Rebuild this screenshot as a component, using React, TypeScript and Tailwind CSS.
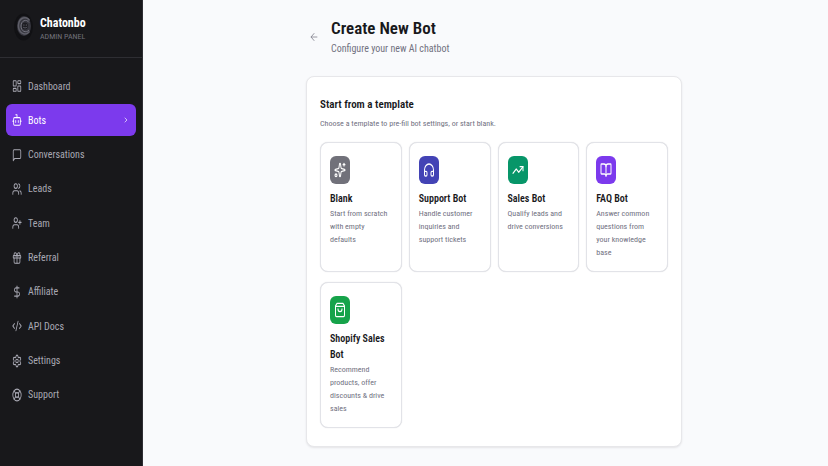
import type { ReactNode } from "react";
import {
  ArrowLeft,
  BookOpen,
  ChevronRight,
  CodeXml,
  DollarSign,
  Gift,
  Headphones,
  LayoutDashboard,
  LifeBuoy,
  Settings,
  Sparkles,
  TrendingUp,
  UserPlus,
  Users,
} from "lucide-react";
import type { LucideIcon, LucideProps } from "lucide-react";

function Glyph({ className, children }: { className?: string; children: ReactNode }) {
  return (
    <svg
      viewBox="0 0 24 24"
      preserveAspectRatio="none"
      fill="none"
      stroke="currentColor"
      strokeWidth="2"
      strokeLinecap="round"
      strokeLinejoin="round"
      className={className}
      aria-hidden="true"
    >
      {children}
    </svg>
  );
}

function BotIcon({ className }: LucideProps) {
  return (
    <Glyph className={className}>
      <path d="M12 8V3H9" />
      <rect x="4" y="8" width="16" height="13" rx="2" />
      <path d="M2 14h2M20 14h2M9 13v3M15 13v3" />
    </Glyph>
  );
}

function MessageIcon({ className }: LucideProps) {
  return (
    <Glyph className={className}>
      <path d="M21 16a2 2 0 0 1-2 2H6.500L3 21.500V5a2 2 0 0 1 2-2h14a2 2 0 0 1 2 2z" />
    </Glyph>
  );
}

function ShopBagIcon({ className }: LucideProps) {
  return (
    <Glyph className={className}>
      <path d="M6 2 3 6v14a2 2 0 0 0 2 2h14a2 2 0 0 0 2-2V6l-3-4z" />
      <path d="M3 6.500h18" />
      <path d="M16 10.500a4 4 0 0 1-8 0" />
    </Glyph>
  );
}

function Logo() {
  return (
    <svg viewBox="0 0 20 28" className="h-7 w-5 shrink-0" fill="none" role="img" aria-label="Chatonbo logo">
      <ellipse cx="9.500" cy="14" rx="9.500" ry="13.500" fill="#111114" />
      <ellipse cx="10" cy="13" rx="7" ry="10" fill="#36363e" />
      <path d="M15.500 7.500C12.500 2.500 5 4.500 4.500 12s6.500 12 11 6.500" stroke="#5f5f69" strokeWidth="1.500" />
      <path d="M15 9.500C12.500 5.500 7 7.500 7 13s5 7.500 8 4" stroke="#74747f" strokeWidth="1" />
      <ellipse cx="11" cy="13" rx="3" ry="3.500" fill="#1c1c21" />
      <path d="M9 14c1.200 1.200 3 1.200 4.200 0" stroke="#666671" strokeWidth="0.800" />
      <circle cx="9.900" cy="12" r="0.600" fill="#777782" />
      <circle cx="12.300" cy="12" r="0.600" fill="#777782" />
    </svg>
  );
}

type NavIcon = LucideIcon | typeof BotIcon;

const nav: { label: string; icon: NavIcon; active?: boolean }[] = [
  { label: "Dashboard", icon: LayoutDashboard },
  { label: "Bots", icon: BotIcon, active: true },
  { label: "Conversations", icon: MessageIcon },
  { label: "Leads", icon: Users },
  { label: "Team", icon: UserPlus },
  { label: "Referral", icon: Gift },
  { label: "Affiliate", icon: DollarSign },
  { label: "API Docs", icon: CodeXml },
  { label: "Settings", icon: Settings },
  { label: "Support", icon: LifeBuoy },
];

const templates: { title: string; text: string; icon: NavIcon; color: string }[] = [
  { title: "Blank", text: "Start from scratch with empty defaults", icon: Sparkles, color: "bg-[#71717a]" },
  { title: "Support Bot", text: "Handle customer inquiries and support tickets", icon: Headphones, color: "bg-[#4343b5]" },
  { title: "Sales Bot", text: "Qualify leads and drive conversions", icon: TrendingUp, color: "bg-[#079669]" },
  { title: "FAQ Bot", text: "Answer common questions from your knowledge base", icon: BookOpen, color: "bg-[#7c3aed]" },
  { title: "Shopify Sales Bot", text: "Recommend products, offer discounts & drive sales", icon: ShopBagIcon, color: "bg-[#16a34a]" },
];

function NavItem({ label, icon: Icon, active }: (typeof nav)[number]) {
  return (
    <li>
      <a
        href="#"
        aria-current={active ? "page" : undefined}
        className={
          active
            ? "flex h-8 items-center gap-[6px] rounded-md bg-[#7c3aed] px-[6px] text-white"
            : "flex h-8 items-center gap-[6px] rounded-md px-[6px] text-[#a8a8b3]"
        }
      >
        <Icon className="h-[14px] w-[10px] shrink-0" preserveAspectRatio="none" />
        <span className="flex-1">{label}</span>
        {active && <ChevronRight className="h-2 w-2" />}
      </a>
    </li>
  );
}

function Tile({ icon: Icon, color, title, children }: { icon: NavIcon; color: string; title: string; children: ReactNode }) {
  return (
    <button
      type="button"
      className="flex flex-col items-start rounded-lg border border-[#e2e3e8] bg-white px-[9px] pt-[13px] pb-3 text-left shadow-[0_0_1px_#d4d4d8]"
    >
      <span className={`flex h-7 w-5 items-center justify-center rounded-md text-white ${color}`}>
        <Icon className="h-4 w-3" preserveAspectRatio="none" />
      </span>
      <span className="mt-[7px] text-[10px] leading-4 font-semibold text-[#18181b]">{title}</span>
      <span className="pr-1 text-[8px] leading-[13px] text-[#71717f]">{children}</span>
    </button>
  );
}

export default function App() {
  return (
    <div className="flex min-h-screen bg-[#f9fafc] font-['Roboto_Condensed',Roboto,sans-serif]">
      <aside className="w-[143px] shrink-0 border-r border-[#2e2e33] bg-[#18181b]">
        <div className="flex h-[58px] items-center gap-[6px] border-b border-[#2e2e33] px-[14px] pb-1">
          <Logo />
          <div className="pt-1">
            <p className="text-[12px] leading-4 font-bold text-white">Chatonbo</p>
            <p className="text-[8px] leading-3 text-[#71717a]">ADMIN PANEL</p>
          </div>
        </div>
        <nav aria-label="Main" className="px-[6px] pt-3 text-[10px]">
          <ul className="flex h-[341px] flex-col justify-between">
            {nav.map((item) => (
              <NavItem key={item.label} {...item} />
            ))}
          </ul>
        </nav>
      </aside>
      <main className="flex-1 pt-4 pl-[17px]">
        <div className="mx-auto max-w-[376px]">
          <header className="flex items-center gap-3 pl-[3px]">
            <button type="button" aria-label="Back" className="text-[#8e8e99]">
              <ArrowLeft className="h-3 w-[10px]" preserveAspectRatio="none" />
            </button>
            <div>
              <h1 className="text-[17px] leading-6 font-semibold text-[#18181b]">Create New Bot</h1>
              <p className="text-[10px] leading-[18px] text-[#71717f]">Configure your new AI chatbot</p>
            </div>
          </header>
          <section className="mt-[18px] rounded-lg border border-[#e7e7ea] bg-white px-[13px] pt-5 pb-[18px] shadow-[0_1px_2px_#e4e4e7]">
            <h2 className="text-[11px] leading-4 font-semibold text-[#18181b]">Start from a template</h2>
            <p className="mt-1 text-[8px] leading-[13px] text-[#71717f]">
              Choose a template to pre-fill bot settings, or start blank.
            </p>
            <div className="mt-3 grid grid-cols-4 gap-x-[7px] gap-y-[10px]">
              {templates.map((t) => (
                <Tile key={t.title} icon={t.icon} color={t.color} title={t.title}>
                  {t.text}
                </Tile>
              ))}
            </div>
          </section>
        </div>
      </main>
    </div>
  );
}
